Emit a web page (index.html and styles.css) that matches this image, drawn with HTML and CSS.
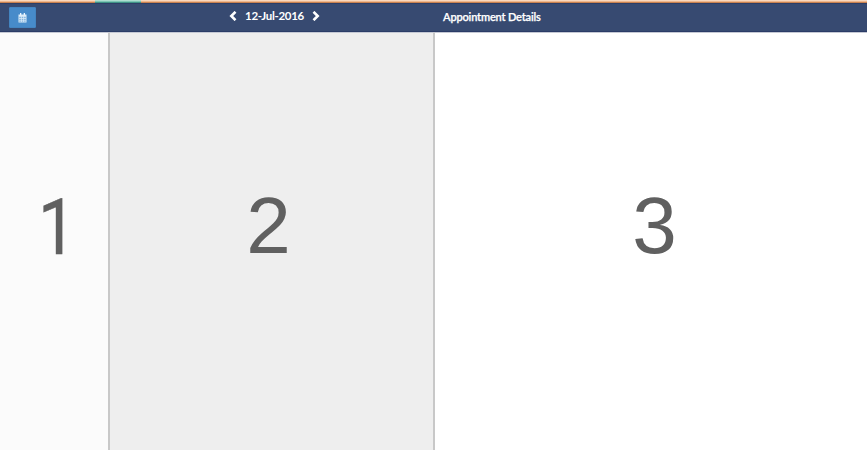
FILE: index.html
```html
<!DOCTYPE html>
<html lang="en">
<head>
<meta charset="utf-8">
<title>Appointments</title>
<link rel="stylesheet" href="styles.css">
</head>
<body>
<div class="accent"><span class="accent-tab"></span></div>
<header class="toolbar">
  <div class="tools">
    <button class="calendar" aria-label="Calendar">
      <svg width="9" height="10" viewBox="0 0 9 10"><path d="M.5 1.5h8v8h-8z" fill="#dcecf8"/><path d="M2 0h1.3v2.2H2zM5.7 0H7v2.2H5.7z" fill="#edf7ff"/><path d="M1.3 3.8h1.6v1.3H1.3zM3.7 3.8h1.6v1.3H3.7zM6.1 3.8h1.6v1.3H6.1zM1.3 5.7h1.6V7H1.3zM3.7 5.7h1.6V7H3.7zM6.1 5.7h1.6V7H6.1zM1.3 7.6h1.6v1.2H1.3zM3.7 7.6h1.6v1.2H3.7zM6.1 7.6h1.6v1.2H6.1z" fill="#83b4de"/></svg>
    </button>
  </div>
  <div class="date-nav">
    <svg width="8" height="10" viewBox="0 0 8 10"><path d="M6.5 .8 2.3 5l4.2 4.2"/></svg>
    <span class="date">12-Jul-2016</span>
    <svg width="8" height="10" viewBox="0 0 8 10"><path d="M1.5 .8l4.2 4.2-4.2 4.2"/></svg>
  </div>
  <h1 class="title">Appointment Details</h1>
</header>
<main class="panels">
  <section class="panel first"><span class="number one">1</span></section>
  <section class="panel second"><span class="number">2</span></section>
  <section class="panel third"><span class="number">3</span></section>
</main>
</body>
</html>
```
FILE: styles.css
```css
* { box-sizing: border-box; }
body {
  margin: 0;
  height: 450px;
  overflow: hidden;
  display: flex;
  flex-direction: column;
  font-family: Lato, sans-serif;
  background: #fff;
}
.accent {
  height: 3px;
  flex: none;
  padding-left: 95px;
  background: linear-gradient(#fbd9bd 0 1px, #f0b78c 1px 2px, #c98250 2px);
}
.accent-tab {
  display: block;
  width: 46px;
  height: 3px;
  background: linear-gradient(#aeddd0 0 1px, #7cc5b4 1px 2px, #3f9287 2px);
}
.toolbar {
  height: 29px;
  flex: none;
  display: grid;
  grid-template-columns: 110px 325px 1fr;
  background: #374a71;
  border-top: 1px solid #2d3e66;
  border-bottom: 1px solid #2b3c67;
  color: #fff;
}
.tools { padding: 3px 0 0 9px; }
.calendar {
  display: flex;
  align-items: center;
  justify-content: center;
  width: 27px;
  height: 21px;
  padding: 0;
  border: 1px solid #4384c0;
  border-radius: 1px;
  background: #478bca;
}
.date-nav {
  display: flex;
  align-items: center;
  justify-content: center;
  gap: 8px;
  padding: 0 0 3px 4px;
}
.date-nav svg { fill: none; stroke: #fff; stroke-width: 2.6; }
.date { font-size: 11.5px; font-weight: 700; line-height: 14px; letter-spacing: -.3px; }
.title {
  margin: 0;
  padding: 6px 0 0 8px;
  font-size: 11px;
  line-height: 14px;
  font-weight: 600;
  letter-spacing: -.16px;
  -webkit-text-stroke: .25px #fff;
}
.panels {
  flex: 1;
  display: grid;
  grid-template-columns: 110px 325px 1fr;
}
.panel { padding-top: 148px; text-align: center; border-top: 1px solid #c5c9d4; }
.first { background: #fbfbfb; border-right: 2px solid #c8c8c8; }
.second { background: #eee; border-right: 2px solid #c8c8c8; padding-right: 6px; }
.third { background: #fff; padding-left: 7px; }
.number {
  display: block;
  color: #606060;
  font: 80px/90px "Liberation Sans", sans-serif;
}
.one {
  padding: 2px 0 0 7px;
  font-family: Roboto, sans-serif;
  font-size: 77px;
  transform: scaleX(.88);
  -webkit-text-stroke: .4px #606060;
}
```
